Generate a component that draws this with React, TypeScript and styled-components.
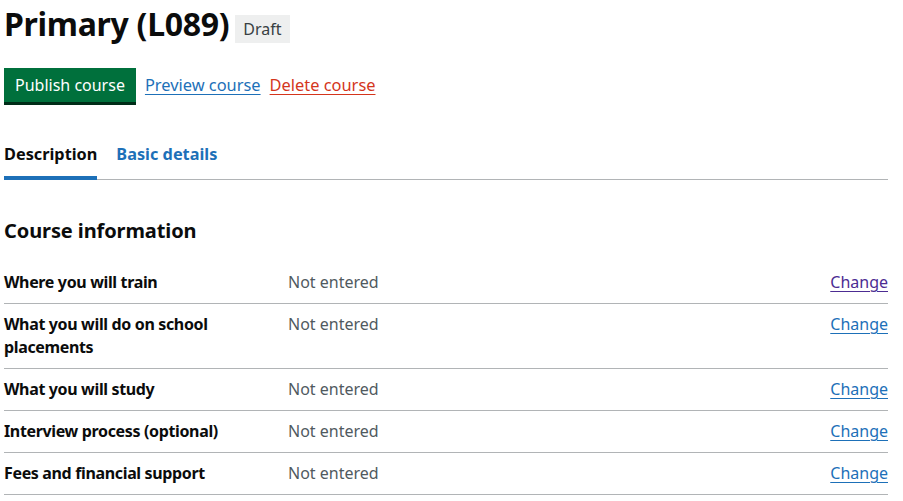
import styled, { createGlobalStyle } from 'styled-components';

const GlobalStyle = createGlobalStyle`
    body
    {
        margin: 0;
        background: #ffffff;
        color: #0b0c0c;
        font-family: "Noto Sans", "Liberation Sans", Arial, sans-serif;
    }
`;

const rows = [
    { key: "Where you will train", visited: true },
    { key: "What you will do on school placements", visited: false },
    { key: "What you will study", visited: false },
    { key: "Interview process (optional)", visited: false },
    { key: "Fees and financial support", visited: false },
];

const App = () => (
    <>
        <GlobalStyle />
        <Page>
            <TitleRow>
                <Title>Primary (L089)</Title>
                <Tag>Draft</Tag>
            </TitleRow>

            <Actions>
                <PublishButton>Publish course</PublishButton>
                <ActionLink href="#">Preview course</ActionLink>
                <ActionLink href="#" danger>Delete course</ActionLink>
            </Actions>

            <Tabs>
                <Tab selected>Description</Tab>
                <Tab>Basic details</Tab>
            </Tabs>

            <SectionHeading>Course information</SectionHeading>

            <SummaryList>
                {rows.map(row => (
                    <SummaryRow key={row.key}>
                        <Key>{row.key}</Key>
                        <Value>Not entered</Value>
                        <ChangeCell>
                            <ChangeLink href="#" visited={row.visited}>Change</ChangeLink>
                        </ChangeCell>
                    </SummaryRow>
                ))}
            </SummaryList>
        </Page>
    </>
);

const Page = styled.main`
    width: 884px;
    padding: 0 4px;
`;

const TitleRow = styled.div`
    display: flex;
    align-items: flex-start;
    gap: 6px;
    padding-top: 2px;
`;

const Title = styled.h1`
    margin: 0;
    font-size: 32px;
    line-height: 44px;
    font-weight: 700;
    letter-spacing: -0.3px;
`;

const Tag = styled.strong`
    display: inline-block;
    margin-top: 13px;
    padding: 4px 8px 3px;
    background: #eeefef;
    color: #383f43;
    font-size: 16px;
    font-weight: 400;
    line-height: 21px;
`;

const Actions = styled.div`
    display: flex;
    align-items: center;
    gap: 9px;
    margin-top: 22px;
`;

const PublishButton = styled.button`
    height: 34px;
    padding: 0 11px;
    border: 0;
    border-radius: 0;
    background: #00703c;
    box-shadow: 0 3px 0 #002d18;
    color: #ffffff;
    font-family: inherit;
    font-size: 16px;
    line-height: 34px;
    cursor: pointer;
`;

const ActionLink = styled.a<{danger? : boolean}>`
    color: ${props => props.danger ? "#d4351c" : "#1d70b8"};
    font-size: 16.4px;
    line-height: 34px;
    text-decoration: underline;
    text-underline-offset: 3px;
`;

const Tabs = styled.nav`
    display: flex;
    gap: 19px;
    margin-top: 36px;
    border-bottom: 1px solid #b1b4b6;
`;

const Tab = styled.a<{selected? : boolean}>`
    padding: 4px 0 10px;
    margin-bottom: -1px;
    border-bottom: 4px solid ${props => props.selected ? "#1d70b8" : "transparent"};
    color: ${props => props.selected ? "#0b0c0c" : "#1d70b8"};
    font-size: 16.3px;
    font-weight: 700;
    line-height: 24px;
`;

const SectionHeading = styled.h2`
    margin: 37px 0 17px;
    font-size: 20px;
    line-height: 28px;
    font-weight: 700;
    letter-spacing: -0.1px;
`;

const SummaryList = styled.dl`
    margin: 0;
`;

const SummaryRow = styled.div`
    display: grid;
    grid-template-columns: 284px 1fr auto;
    padding: 9px 0 9px;
    border-bottom: 1px solid #b1b4b6;
    font-size: 16px;
    line-height: 23px;
`;

const Key = styled.dt`
    padding-right: 30px;
    font-weight: 700;
    letter-spacing: -0.35px;
`;

const Value = styled.dd`
    margin: 0;
    color: #505a5f;
`;

const ChangeCell = styled.dd`
    margin: 0;
    text-align: right;
`;

const ChangeLink = styled.a<{visited? : boolean}>`
    color: ${props => props.visited ? "#4c2c92" : "#1d70b8"};
    text-decoration: underline;
    text-underline-offset: 3px;
`;

export default App;
